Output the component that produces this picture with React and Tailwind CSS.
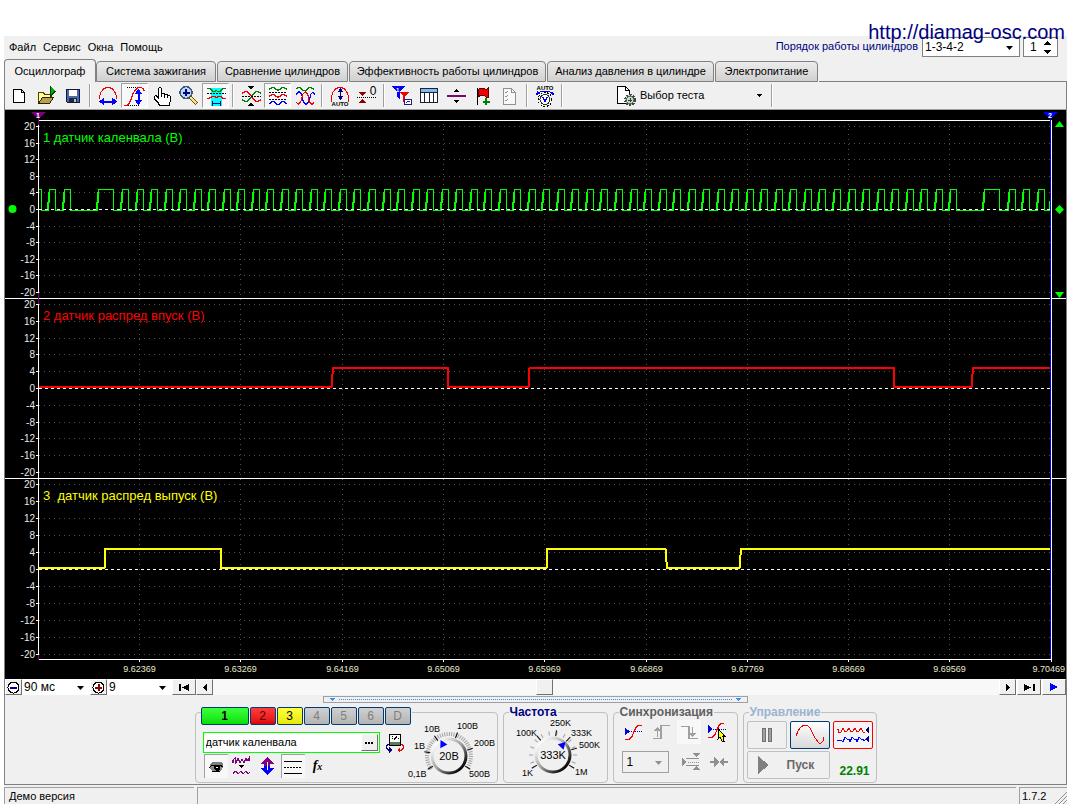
import React, { useState } from 'react';
import clsx from 'clsx';

const menuItems = ['Файл', 'Сервис', 'Окна', 'Помощь'];

const tabs = [
  { label: 'Осциллограф', width: 'w-[92px]' },
  { label: 'Система зажигания', width: 'w-[120px]' },
  { label: 'Сравнение цилиндров', width: 'w-[131px]' },
  { label: 'Эффективность работы цилиндров', width: 'w-[197px]' },
  { label: 'Анализ давления в цилиндре', width: 'w-[167px]' },
  { label: 'Электропитание', width: 'w-[103px]' },
];

const channels = [
  { id: '1', style: 'w-12 font-bold text-black bg-linear-to-b from-[#3cff3c] to-[#00e000]' },
  { id: '2', style: 'w-[26px] text-[#500000] bg-linear-to-b from-[#ff3c3c] to-[#e00000]' },
  { id: '3', style: 'w-[26px] text-black bg-linear-to-b from-[#ffff3c] to-[#e8e800]' },
  { id: '4', style: 'w-[26px] text-[#808080] bg-linear-to-b from-[#d0d0d0] to-[#b4b4b4]' },
  { id: '5', style: 'w-[26px] text-[#808080] bg-linear-to-b from-[#d0d0d0] to-[#b4b4b4]' },
  { id: '6', style: 'w-[26px] text-[#808080] bg-linear-to-b from-[#d0d0d0] to-[#b4b4b4]' },
  { id: 'D', style: 'w-[26px] text-[#808080] bg-linear-to-b from-[#d0d0d0] to-[#b4b4b4]' },
];

/* ---------- Small shared pieces ---------- */

const Icon = ({ w = 24, h = 24, children, className }) => (
  <svg
    width={w}
    height={h}
    viewBox={`0 0 ${w} ${h}`}
    fill="none"
    shapeRendering="crispEdges"
    className={clsx('shrink-0', className)}
    aria-hidden="true"
  >
    {children}
  </svg>
);

const ToolButton = ({ label, pressed, children }) => (
  <button
    type="button"
    aria-label={label}
    aria-pressed={pressed}
    className={clsx(
      'w-[27px] h-[25px] flex items-center justify-center border',
      pressed ? 'bg-[#f8f8f8] border-t-[#a0a0a0] border-l-[#a0a0a0] border-r-white border-b-white' : 'border-transparent'
    )}
  >
    {children}
  </button>
);

const Separator = () => <div className="w-0.5 h-[23px] mx-[3px] shrink-0 border-l border-[#a0a0a0] bg-white"></div>;

const Select = ({ label, value, className, muted }) => (
  <div className={clsx('relative flex shrink-0', className)}>
    <select
      aria-label={label}
      className="appearance-none w-full h-full pl-0.5 bg-transparent outline-none text-[12px] leading-4"
      defaultValue={value}
    >
      <option>{value}</option>
    </select>
    <svg width="7" height="4" viewBox="0 0 7 4" className="absolute right-1.5 top-1/2 -mt-px pointer-events-none">
      <path d="M0 0h7L3.5 4z" fill={muted ? '#909090' : '#000'} />
    </svg>
  </div>
);

/* ---------- Toolbar icons ---------- */

const NewIcon = () => (
  <Icon>
    <path d="M6.5 5.500h8l3 3v10h-11z" fill="#fff" stroke="#000" />
    <path d="M14.5 5.500v3h3" stroke="#000" />
  </Icon>
);
const OpenIcon = () => (
  <Icon>
    <path d="M4.5 19.500v-11h5l1 2h7v3" fill="#ffff9c" stroke="#504000" />
    <path d="M4.5 19.500l4-6h11l-4 6z" fill="#b8a050" stroke="#302000" />
    <path d="M16 2l6 5-6 5z" fill="#00b000" />
    <path d="M16.500 2v10l5-5" stroke="#004000" />
  </Icon>
);
const SaveIcon = () => (
  <Icon>
    <path d="M5.500 5.500h13v13h-12l-1-1z" fill="#4a6ab0" stroke="#101840" />
    <path d="M8 6h8v6H8z" fill="#fff" />
    <path d="M8 14h8v4H8z" fill="#202838" />
    <path d="M13 15h2v3h-2z" fill="#c0c0c0" />
  </Icon>
);
const WidthIcon = () => (
  <Icon>
    <path d="M3.500 15v-2l1-4 3-4 3-1.500h3l3 1.500 3 4 1 4v2" stroke="#f00000" />
    <path d="M6 17.500h12" stroke="#0000ff" strokeWidth="2" />
    <path d="M3 17.500l5-4v8zM21 17.500l-5-4v8z" fill="#0000ff" />
  </Icon>
);
const HeightIcon = () => (
  <Icon>
    <path d="M4 3.500h11M5 21.500h12" stroke="#000" strokeDasharray="1 1" />
    <path d="M1 21.500h3l2-2 2-4 2-6 2-3 3-3h3l2 1 1.500 3" stroke="#f00000" strokeWidth="1.200" />
    <path d="M15.500 8v10" stroke="#0000ff" strokeWidth="2" />
    <path d="M15.500 5l4 5h-8zM15.500 21l4-5h-8z" fill="#0000ff" />
  </Icon>
);
const HandIcon = () => (
  <Icon>
    <path
      d="M8.500 14V4.500l1-1h1l1 1V10l1-1h1l1 1v1l1-1h1l1 1v1l1-1h1l1 1.500V17l-1.500 3v1.500H9.500L8 18.500l-4-4v-2l2-1z"
      fill="#fff"
      stroke="#000"
    />
    <path d="M11.500 10v3M14.500 11v3M17.500 12v2" stroke="#000" />
  </Icon>
);
const ZoomIcon = () => (
  <Icon>
    <path d="M13 13l7 7" stroke="#705010" strokeWidth="4" />
    <path d="M13 13l6.500 6.500" stroke="#ffe080" strokeWidth="2" />
    <circle cx="9" cy="8.500" r="6" fill="#b8dcf8" stroke="#405870" strokeWidth="1.500" />
    <path d="M9 5v7M5.500 8.500h7" stroke="#000090" strokeWidth="2" />
  </Icon>
);
const CursorAreaIcon = () => (
  <Icon>
    <path d="M7 4h11v18H7z" fill="#00ffff" />
    <path d="M3 4.500h3l3 3h2l1-1 2 1h2l3-3h3" stroke="#008000" strokeWidth="1.300" />
    <path d="M3 9.500h19" stroke="#000" strokeDasharray="2 1" />
    <path d="M3 14.500h2l3-2h3l1 1 3-1h2l2 2h3" stroke="#f00000" strokeWidth="1.300" />
    <path d="M8 19.500h9M8.500 17v5M16.500 17v5" stroke="#000080" />
  </Icon>
);
const CrossIcon = () => (
  <Icon>
    <path d="M3 9.500l3-2h2l3 3 4 5 2 2h2l3-2" stroke="#f00000" strokeWidth="1.200" />
    <path d="M3 15.500l3 2h2l3-3 4-5 2-2h2l3 2" stroke="#008000" strokeWidth="1.200" />
    <path d="M3 12.500h19" stroke="#000" strokeDasharray="2 1" />
    <path d="M9 2h6l-3 4zM9 22h6l-3-4z" fill="#000" />
  </Icon>
);
const WavesIcon = () => (
  <Icon>
    <path d="M3 5.500l3-2h2l3 2.500h2l3-2.500h2l3 2" stroke="#008000" strokeWidth="1.200" />
    <path d="M3 12.500l3-2h2l3 2.500h2l3-2.500h2l3 2" stroke="#f00000" strokeWidth="1.200" />
    <path d="M3 20l3-2.500h2l3 3h2l3-3h2l3 2.500" stroke="#0000ff" strokeWidth="1.200" />
    <path d="M3 8.500h18M3 15.500h18" stroke="#000" strokeDasharray="2 1" />
  </Icon>
);
const OverlayIcon = () => (
  <Icon>
    <path d="M3 5l2-1.500h2l3 3h3l3-3h2l3 2" stroke="#008000" strokeWidth="1.200" />
    <path d="M3 11l2-3h2l2 3 1 6 2 3h2l2-3 2-7 2-2 2 3" stroke="#0000ff" strokeWidth="1.200" />
    <path d="M3 18l2 2h1l2-3 2-7 2-2h1l2 3 1 6 2 3h2l1-2" stroke="#f00000" strokeWidth="1.200" />
  </Icon>
);
const AutoHeightIcon = () => (
  <Icon>
    <path d="M3.500 18v-5l1-4 3-4 3-1.500h3l3 1.500 3 4 1 4v5" stroke="#f00000" />
    <path d="M12.500 6v8" stroke="#000080" strokeWidth="1.500" />
    <path d="M12.500 4l3 4h-6zM12.500 16l3-4h-6z" fill="#000080" />
    <text x="12" y="22" fontSize="6" fontWeight="bold" textAnchor="middle" fill="#000">AUTO</text>
  </Icon>
);
const ZeroIcon = () => (
  <Icon>
    <path d="M2 13.500h20" stroke="#000" strokeDasharray="1 1" />
    <path d="M4 8h7l-3.500 4.500zM4 19h7l-3.500-4.500z" fill="#900000" />
    <text x="18" y="11" fontSize="12" textAnchor="middle" fill="#000">0</text>
  </Icon>
);
const FilterIcon = () => (
  <Icon>
    <path d="M1 2h14l-5 6v7l-3-2V8z" fill="#0000ff" />
    <path d="M9 8h10l-4 4v8l-2-2v-6z" fill="#f00000" />
    <text x="6" y="8" fontSize="6" fontWeight="bold" fill="#fff">1</text>
    <path d="M14.500 15.500h7v5h-7z" fill="#fff" stroke="#202080" />
    <path d="M16 19l2-2 2 1" stroke="#2020c0" />
  </Icon>
);
const TableIcon = () => (
  <Icon>
    <path d="M3.500 4.500h17v14h-17z" fill="#fff" stroke="#202030" />
    <path d="M4 5h16v3H4z" fill="#80b8f0" />
    <path d="M3 8.500h18M7.500 8v10M12.500 8v10M16.500 8v10" stroke="#202030" />
  </Icon>
);
const SplitIcon = () => (
  <Icon>
    <path d="M3 12h19" stroke="#800080" strokeWidth="2" />
    <path d="M12 5l3 3H9zM12 19l3-3H9z" fill="#000" />
  </Icon>
);
const FlagIcon = () => (
  <Icon>
    <path d="M6.500 4v17" stroke="#000" />
    <path d="M7 6l2-2h3l2 1h2l1-1v9h-2l-2-2h-3l-3 2z" fill="#f00000" stroke="#600000" />
    <path d="M15 14v7M12 17.500h7" stroke="#008000" strokeWidth="2" />
  </Icon>
);
const ChecklistIcon = () => (
  <Icon>
    <path d="M5.500 4.500h8l4 4v12h-12z" fill="#f8f8f8" stroke="#909090" />
    <path d="M13.500 4.500v4h4" stroke="#909090" />
    <path d="M7 8l1 1 2-2M7 12l1 1 2-2M7 16l1 1 2-2" stroke="#909090" />
  </Icon>
);
const AutoSetupIcon = () => (
  <Icon>
    <text x="12" y="6" fontSize="6" fontWeight="bold" textAnchor="middle" fill="#000">AUTO</text>
    <path d="M5 9l3-1.500h8L19 9" stroke="#0000f0" />
    <path d="M3 11l1-4 3 3zM21 11l-1-4-3 3z" fill="#0000f0" />
    <circle cx="12" cy="15.500" r="7" stroke="#000" strokeDasharray="2 1.500" />
    <circle cx="12" cy="15.500" r="5" fill="#fff" stroke="#303030" />
    <path d="M9.500 13l2.500 4.500 2.500-4.500" stroke="#0000f0" strokeWidth="1.300" />
  </Icon>
);
const TestIcon = () => (
  <Icon w={20} h={20}>
    <path d="M1.500 0.500h8l4 4v13h-12z" fill="#fff" stroke="#000" />
    <path d="M9.500 0.500v4h4" stroke="#000" />
    <circle cx="14" cy="14" r="5" fill="#c0dcc0" stroke="#404840" strokeWidth="2" strokeDasharray="2 1.200" />
    <circle cx="14" cy="14" r="3.500" fill="#c8d8c8" stroke="#607060" />
    <path d="M14 12v4M12 14h4" stroke="#304030" />
  </Icon>
);

/* ---------- Oscillogram ---------- */

// zero: y of the 0 V line, step: pixels per 4 V
const tracks = [
  { zero: 99, step: 16.6, color: '#00ff00', title: '1 датчик каленвала (В)', titleY: 32 },
  { zero: 278, step: 16.8, color: '#ff0000', title: '2 датчик распред впуск (В)', titleY: 210 },
  { zero: 459, step: 17, color: '#ffff00', title: '3  датчик распред выпуск (В)', titleY: 390 },
];
const volts = [20, 16, 12, 8, 4, 0, -4, -8, -12, -16, -20];
const times = ['9.62369', '9.63269', '9.64169', '9.65069', '9.65969', '9.66869', '9.67769', '9.68669', '9.69569', '9.70469'];
const timeX = (i) => Math.round(134 + i * 101.3) + 0.5;

// Crankshaft teeth: x of the rising edge and width of the high level
const teeth = [{ x: 42, width: 6 }, { x: 57, width: 6 }, { x: 91, width: 15 }];
for (let i = 0; i < 58; i++) {
  teeth.push({ x: Math.round(115 + i * 14.53), width: 6 });
}
teeth.push({ x: 977, width: 15 }, { x: 1002, width: 6 }, { x: 1016, width: 6 }, { x: 1031, width: 6 });

const crankPath = teeth.reduce(
  (d, { x, width }) => `${d}H${x + 0.5}L${x + 1.5} 91L${x + 2.5} 79.5H${x + 2.5 + width}V100.5`,
  'M34 79.5H36.5V100.5'
);
const risePath = teeth.map(({ x }) => `M${x + 1} 101V92M${x + 2} 93V82`).join('');

const Oscillogram = () => (
  <svg viewBox="0 0 1061 569" className="block w-full h-auto bg-black" role="img" aria-label="Осциллограмма">
    {tracks.map((track) => (
      <g key={track.title}>
        {volts.map((v) => {
          const y = Math.round(track.zero - (v / 4) * track.step) + 0.5;
          return (
            <g key={v}>
              {v !== 0 && <path d={`M34 ${y}H1045`} stroke="#505050" strokeDasharray="1 4" />}
              <path d={`M31 ${y}h3`} stroke="#fff" />
              <text x="30" y={y + 3} fontSize="10" textAnchor="end" fill="#e8e8e8">{v}</text>
            </g>
          );
        })}
      </g>
    ))}
    {times.map((t, i) => (
      <g key={t}>
        {i < 9 && <path d={`M${timeX(i)} 14V548`} stroke="#505050" strokeDasharray="1 4" />}
        <path d={`M${timeX(i)} 549v3`} stroke="#fff" />
        <text x={i < 9 ? timeX(i) : 1060} y="562" fontSize="9" textAnchor={i < 9 ? 'middle' : 'end'} fill="#e8e8d0">{t}</text>
      </g>
    ))}

    {/* Signals */}
    <g fill="none" shapeRendering="crispEdges">
      <path d={crankPath + 'H1044.5V91'} stroke="#00ff00" />
      <path d={risePath} stroke="#00ff00" strokeWidth="2" />
      <path d="M34 277H326.500L328 258H442.500V277H523.500L524.500 258H888.500V277H966.500L968 258H1045" stroke="#ff0000" strokeWidth="2" />
      <path d="M34 458H99.500L100.500 438.500H215.500V458H541.500L542.500 438.500H660.500L662 458H734.500L736 438.500H1045" stroke="#ffff00" strokeWidth="2" />
    </g>
    {tracks.map((track) => (
      <g key={track.title}>
        <path d={`M34 ${track.zero + 0.5}H1045`} stroke="#fff" strokeDasharray="3 3" />
        <text x="38" y={track.titleY} fontSize="13" fill={track.color} style={{ whiteSpace: 'pre' }}>{track.title}</text>
      </g>
    ))}

    {/* Frame */}
    <path d="M33 10.500H1046M0 188.500H1061M0 368.500H1061M33 549.500H1046M33.500 15V549" stroke="#fff" />
    <path d="M33.500 8v7M33.500 183v11M33.500 545v5" stroke="#800080" />
    <path d="M1045.500 8V549" stroke="#0000ff" />
    <path d="M1046.500 10V552" stroke="#fff" />
    <path d="M26 2h15l-7.500 7z" fill="#800080" />
    <path d="M1038 2h15l-7.500 7z" fill="#0000ff" />
    <text x="33" y="8" fontSize="7" fontWeight="bold" textAnchor="middle" fill="#fff">1</text>
    <text x="1045" y="8" fontSize="7" fontWeight="bold" textAnchor="middle" fill="#fff">2</text>
    <circle cx="7.500" cy="99" r="4" fill="#00ff00" />
    <path d="M1050 17h9l-4.500-6zM1050 182h9l-4.500 6zM1054.500 95l4.500 4.500-4.500 4.500-4.500-4.500z" fill="#00ff00" />
  </svg>
);

/* ---------- Knobs ---------- */

const Knob = ({ id, w, cx, value, labels, ticks, majors, pointer }) => (
  <svg width={w} height="62" viewBox={`0 0 ${w} 62`} role="img" aria-label={value}>
    <defs>
      <linearGradient id={id} x1="0" y1="0" x2="1" y2="1">
        <stop offset="0.150" stopColor="#ffffff" />
        <stop offset="0.500" stopColor="#a0a0a0" />
        <stop offset="0.850" stopColor="#000000" />
      </linearGradient>
    </defs>
    {ticks.map((a) => (
      <path key={a} d="M0 -20v-4" stroke="#a0a0a0" transform={`translate(${cx} 37) rotate(${a})`} />
    ))}
    {majors.map((a) => (
      <path key={a} d="M0 -19v-6" stroke="#000" transform={`translate(${cx} 37) rotate(${a})`} />
    ))}
    <circle cx={cx} cy="37" r="18.500" fill={`url(#${id})`} />
    <circle cx={cx} cy="37" r="15.500" fill="#f0f0f0" />
    <path d="M-4 2h8L0-5z" fill="#0000ff" transform={`translate(${cx} 37) rotate(${pointer}) translate(0 -13)`} />
    <text x={cx} y="41" fontSize="11" textAnchor="middle">{value}</text>
    {labels.map((l) => (
      <text key={l.text} x={l.x} y={l.y} fontSize="9">{l.text}</text>
    ))}
  </svg>
);

const range = (from, to, step) => {
  const list = [];
  for (let a = from; a <= to; a += step) list.push(a);
  return list;
};

const Group = ({ title, className, titleClass, children }) => (
  <fieldset className={clsx('h-[77px] px-[3px] border border-[#c0c0c0] rounded-sm min-w-0', className)}>
    <legend className={clsx('ml-0.5 px-px text-[12px] leading-[13px] font-bold', titleClass)}>{title}</legend>
    {children}
  </fieldset>
);

const MiniButton = ({ label, pressed, children, className }) => (
  <button
    type="button"
    aria-label={label}
    className={clsx(
      'w-6 h-6 shrink-0 flex items-center justify-center',
      pressed && 'bg-[#f8f8f8] border-t border-l border-[#a0a0a0]',
      className
    )}
  >
    {children}
  </button>
);

const ScrollButton = ({ label, className, children }) => (
  <button
    type="button"
    aria-label={label}
    className={clsx('h-4 shrink-0 flex items-center justify-center bg-[#f0f0f0] border border-t-white border-l-white border-r-[#707070] border-b-[#707070]', className)}
  >
    {children}
  </button>
);

const ChannelPanel = ({ active, onSelect }) => {
  const [name, setName] = useState('датчик каленвала');

  return (
    <div className="w-[303px] h-[71px] mt-1.5 border border-[#c0c0c0] rounded-sm flex justify-between">
      <div className="w-[216px] shrink-0 pl-[5px]">
        <div className="-mt-1.5 flex gap-px bg-[#f0f0f0]">
          {channels.map((c) => (
            <button
              key={c.id}
              type="button"
              aria-pressed={active === c.id}
              onClick={() => onSelect(c.id)}
              className={clsx('h-[18px] border border-[#003c74] rounded-xs text-[12px] leading-4', c.style)}
            >
              {c.id}
            </button>
          ))}
        </div>
        <div className="mt-[7px] ml-0.5 flex items-center gap-1.5">
          <div className="w-[177px] h-[21px] border border-[#00ff00] bg-white flex items-center pr-px">
            <input
              aria-label="Название канала"
              value={name}
              onChange={(e) => setName(e.target.value)}
              className="flex-1 min-w-0 pl-0.5 text-[11px] outline-none"
            />
            <button type="button" aria-label="Выбрать датчик" className="w-[17px] h-[17px] bg-[#f0f0f0] border border-t-white border-l-white border-[#707070] flex items-center justify-center">
              <Icon w={8} h={2}><path d="M0 0h2v2H0zM3 0h2v2H3zM6 0h2v2H6z" fill="#000" /></Icon>
            </button>
          </div>
          <button type="button" aria-label="Калибровка">
            <Icon w={18} h={20}>
              <path d="M3.500 1.500h11v11h-11z" fill="#fff" stroke="#000" />
              <path d="M4 9h10v3H4z" fill="#607860" />
              <path d="M6 5.500h1M8 6.500l3-3M12 5.500h1M6 3.500h1" stroke="#000" />
              <path d="M2.500 11l-2 2v2l2 2h3" stroke="#000080" />
              <path d="M3 14v6l3-3z" fill="#000080" />
              <path d="M15.500 11l2 2v2l-2 2h-3" stroke="#f00000" />
              <path d="M14 14v6l-3-3z" fill="#f00000" />
            </Icon>
          </button>
        </div>
        <div className="mt-px ml-[3px] flex gap-[1px]">
          <MiniButton label="Показать канал" pressed>
            <Icon w={16} h={16}>
              <path d="M2 5l3-2h8l2 2v2H2z" fill="#808078" />
              <path d="M1 9l3-3h8l3 2-2 4H5z" fill="#908880" />
              <path d="M1 8.500l3-2h8l3 1M4 12.500h8" stroke="#000" />
              <path d="M6 7h6v4l-2 1H8l-2-2z" fill="#000" />
              <path d="M8 8h2v1H8z" fill="#fff" />
            </Icon>
          </MiniButton>
          <MiniButton label="Сглаживание">
            <Icon w={20} h={20}>
              <path d="M2 7V4l2-2 1 5 2-5 2 5 2-4 2 4 2-5 1 3 2-3v3" stroke="#800080" strokeWidth="1.200" />
              <path d="M7 9h6l-3 3z" fill="#000" />
              <path d="M2 18l2-3h1l2 3 3-3 2 3 3-3 2 3 2-2" stroke="#800080" />
            </Icon>
          </MiniButton>
          <MiniButton label="Инвертировать" className="ml-px">
            <Icon w={20} h={20}>
              <path d="M10 1l7 7h-4v2H7V8H3z" fill="#800080" />
              <path d="M10 19l7-7h-4v-2H7v2H3z" fill="#0000ff" />
              <path d="M10.500 6v8" stroke="#fff" strokeWidth="1.500" />
            </Icon>
          </MiniButton>
          <MiniButton label="Линии уровня" pressed className="ml-px">
            <Icon w={18} h={16}>
              <path d="M0 2.500h18M0 14.500h18" stroke="#000" />
              <path d="M0 8.500h18" stroke="#000" strokeDasharray="2 1" />
            </Icon>
          </MiniButton>
          <MiniButton label="Функция">
            <span className="font-['Liberation_Serif',serif] italic font-bold text-[14px] leading-4">f<span className="text-[10px]">x</span></span>
          </MiniButton>
        </div>
      </div>
      <div className="-ml-4 mt-1.5">
        <Knob
          id="rangeRing"
          w={93}
          cx={45}
          value="20В"
          ticks={range(-125, 125, 6)}
          majors={[-122, -80, -36, 20, 72, 122]}
          pointer={-28}
          labels={[
            { text: '0,1В', x: 4, y: 58 },
            { text: '1В', x: 10, y: 30 },
            { text: '10В', x: 20, y: 13 },
            { text: '100В', x: 53, y: 10 },
            { text: '200В', x: 70, y: 27 },
            { text: '500В', x: 65, y: 58 },
          ]}
        />
      </div>
    </div>
  );
};

const SyncPanel = () => (
  <Group title="Синхронизация" className="w-[125px]" titleClass="text-[#606060]">
    <div className="mt-px flex gap-1 pl-1">
      <MiniButton label="Синхронизация включена">
        <Icon>
          <path d="M4 8v7l5-3.500z" fill="#0000e0" />
          <path d="M4 11.500h17" stroke="#0000c0" strokeDasharray="1 1" />
          <path d="M4 19.500h4l3-3 2-5 2-4 2-2h4" stroke="#f00000" strokeWidth="1.200" />
        </Icon>
      </MiniButton>
      <MiniButton label="По фронту">
        <Icon>
          <path d="M4 18.500h8v-13h9M8.500 17V9" stroke="#a0a0a0" strokeWidth="1.500" />
          <path d="M5 11l3.500-4 3.500 4z" fill="#a0a0a0" />
        </Icon>
      </MiniButton>
      <MiniButton label="По спаду" className="bg-[#f8f8f8]">
        <Icon>
          <path d="M4 6.500h8v12h9M15.500 7v7" stroke="#a0a0a0" strokeWidth="1.500" />
          <path d="M12 13l3.500 4 3.500-4z" fill="#a0a0a0" />
        </Icon>
      </MiniButton>
      <MiniButton label="Указать уровень">
        <Icon>
          <path d="M3 5v8l5-4z" fill="#0000e0" />
          <path d="M4 9.500h18" stroke="#0000c0" strokeDasharray="1 1" />
          <path d="M3 17.500h4l3-3 2-5 2-4 2-2h3" stroke="#f00000" strokeWidth="1.200" />
          <path d="M13 8.500v10l2-1.500 2 4h2l-1-4.500h2z" fill="#ffff00" stroke="#000" />
        </Icon>
      </MiniButton>
    </div>
    <div className="mt-1.5 pl-[5px] flex items-center">
      <Select label="Канал синхронизации" value="1" muted className="w-[47px] h-[22px] pl-0.5 border border-[#a0a0a0]" />
      <MiniButton label="Уровень" className="ml-2.5">
        <Icon>
          <path d="M3 8l5 4-5 4zM14 3h7l-3.500 4zM14 20h7l-3.500-4z" fill="#909090" />
          <path d="M7 8.500h13M7 15.500h13" stroke="#909090" />
          <path d="M9 12.500h12" stroke="#909090" strokeDasharray="1 1" />
        </Icon>
      </MiniButton>
      <MiniButton label="Центрировать" className="ml-1">
        <Icon><path d="M3 11h4V7l5 5-5 5v-4H3zM21 11h-4V7l-5 5 5 5v-4h4z" fill="#909090" /></Icon>
      </MiniButton>
    </div>
  </Group>
);

const ControlPanel = () => (
  <Group title="Управление" className="w-[134px]" titleClass="text-[#9ab4d2]">
    <div className="mt-0.5 flex gap-[3px]">
      <button type="button" aria-label="Пауза" className="w-10 h-7 flex items-center justify-center border border-[#c0c0c0] rounded-xs">
        <Icon w={12} h={16}><path d="M1.500 1.500h3v13h-3zM7.500 1.500h3v13h-3z" fill="#a0a0a0" stroke="#707070" /></Icon>
      </button>
      <button type="button" aria-label="Осциллограф" className="w-10 h-7 flex items-center justify-center border border-[#003c74] rounded-xs bg-linear-to-b from-white to-[#d8d8d8]">
        <Icon w={30} h={22}><path d="M1 12l2-5 3-4 3-2h3l3 3 5 10 4 5h2l2-2 1-4" stroke="#f00000" /></Icon>
      </button>
      <button type="button" aria-label="Самописец" className="w-10 h-7 flex items-center justify-center border border-[#ff0000] rounded-xs bg-[#f4f4f4]">
        <Icon w={34} h={22}>
          <path d="M1 5h1l1 4 2-1 2-4 2 4 2-1 2-3 2 4 2-1 2-3 2 4 2-1 2-3 2 4h2" stroke="#f00000" />
          <path d="M1 16h4l2 2 2-5 2 2h2l1 3 2-5 2 2h2l1 3 2-5 2 2h2l1 2 2-2" stroke="#0000ff" />
          <path d="M33 3v6l-4-3zM33 12v6l-4-3z" fill="#000080" />
        </Icon>
      </button>
    </div>
    <div className="mt-0.5 flex items-center justify-between pr-[3px]">
      <button type="button" className="w-[83px] h-7 flex items-center pl-2.5 gap-[18px] border border-[#c0c0c0] rounded-xs text-[12px] font-bold text-[#686868]">
        <Icon w={11} h={18}><path d="M0 0v18l11-9z" fill="#808080" /></Icon>
        Пуск
      </button>
      <output className="mt-3 text-[12px] leading-4 font-bold text-[#008000]">22.91</output>
    </div>
  </Group>
);

const App = () => {
  const [activeTab, setActiveTab] = useState(0);
  const [channel, setChannel] = useState('1');

  return (
    <div className="relative bg-white pt-9 pl-1 pr-3 pb-1 font-['Liberation_Sans',Arial,sans-serif] text-[11px] text-black">
      <a href="http://diamag-osc.com" className="absolute right-3.5 top-5 z-10 text-[20px] leading-6 text-[#000080]">
        http://diamag-osc.com
      </a>

      <div className="bg-[#f0f0f0]">
        {/* Menu */}
        <div className="h-[23px] flex items-center justify-between">
          <nav className="flex pl-[5px] gap-[7px]">
            {menuItems.map((item) => (
              <button key={item} type="button">{item}</button>
            ))}
          </nav>
          <div className="flex items-center pr-[9px] mb-0.5">
            <label htmlFor="cylinder" className="mr-1 text-[#000080]">Порядок работы цилиндров</label>
            <div className="relative w-[98px] h-5 border border-[#808080] bg-white">
              <select id="cylinder" className="appearance-none w-full h-full pl-0.5 text-[12px] leading-4 outline-none">
                <option>1-3-4-2</option>
                <option>1-2-4-3</option>
              </select>
              <svg width="7" height="4" viewBox="0 0 7 4" className="absolute right-1.5 top-2 pointer-events-none"><path d="M0 0h7L3.500 4z" /></svg>
            </div>
            <div className="ml-[3px] w-[35px] h-5 border border-[#808080] bg-white flex items-center pr-1.5">
              <input aria-label="Номер цилиндра" defaultValue="1" className="w-5 flex-1 min-w-0 pl-1.5 text-[12px] outline-none" />
              <Icon w={8} h={14}><path d="M0 5h8L4 1zM0 10h8l-4 4z" fill="#000" /></Icon>
            </div>
          </div>
        </div>

        {/* Tabs */}
        <div role="tablist" className="h-[23px] flex items-end">
          {tabs.map((tab, index) => (
            <button
              key={tab.label}
              type="button"
              role="tab"
              aria-selected={activeTab === index}
              onClick={() => setActiveTab(index)}
              className={clsx(
                'shrink-0 border border-[#808080] rounded-t-sm whitespace-nowrap',
                tab.width,
                activeTab === index ? 'h-[23px] border-b-0 bg-[#f0f0f0]' : 'h-[21px] mr-px bg-linear-to-b from-[#ececec] to-[#d0d0d0]'
              )}
            >
              {tab.label}
            </button>
          ))}
          <div className="flex-1 border-b border-[#808080]"></div>
        </div>

        <div className="border-x border-b border-[#808080]">
          {/* Toolbar */}
          <div className="h-7 flex items-center border-b border-[#a0a0a0]">
            <ToolButton label="Новый"><NewIcon /></ToolButton>
            <ToolButton label="Открыть"><OpenIcon /></ToolButton>
            <ToolButton label="Сохранить"><SaveIcon /></ToolButton>
            <Separator />
            <ToolButton label="Растянуть по времени"><WidthIcon /></ToolButton>
            <ToolButton label="Растянуть по амплитуде" pressed><HeightIcon /></ToolButton>
            <ToolButton label="Рука"><HandIcon /></ToolButton>
            <ToolButton label="Увеличить"><ZoomIcon /></ToolButton>
            <ToolButton label="Область между линейками" pressed><CursorAreaIcon /></ToolButton>
            <Separator />
            <ToolButton label="Сжать"><CrossIcon /></ToolButton>
            <ToolButton label="Раздельно" pressed><WavesIcon /></ToolButton>
            <ToolButton label="Совместно"><OverlayIcon /></ToolButton>
            <Separator />
            <ToolButton label="Автомасштаб"><AutoHeightIcon /></ToolButton>
            <ToolButton label="Ноль"><ZeroIcon /></ToolButton>
            <Separator />
            <ToolButton label="Фильтр"><FilterIcon /></ToolButton>
            <ToolButton label="Таблица"><TableIcon /></ToolButton>
            <ToolButton label="Разделить"><SplitIcon /></ToolButton>
            <ToolButton label="Добавить метку"><FlagIcon /></ToolButton>
            <ToolButton label="Список"><ChecklistIcon /></ToolButton>
            <Separator />
            <ToolButton label="Автонастройка"><AutoSetupIcon /></ToolButton>
            <Separator />
            <button type="button" className="w-[152px] h-6 ml-[50px] flex items-center gap-1">
              <TestIcon />
              Выбор теста
              <Icon w={5} h={3} className="ml-auto mr-1.5"><path d="M0 0h5L2.500 3z" fill="#000" /></Icon>
            </button>
            <Separator />
          </div>

          <Oscillogram />

          {/* Scale and scroll bar */}
          <div className="h-4 flex bg-white">
            <ScrollButton label="Уменьшить" className="w-[17px]">
              <Icon w={13} h={13}><circle cx="6.500" cy="6.500" r="5.500" fill="#fff" stroke="#000" /><path d="M3 6.500h7" stroke="#000090" strokeWidth="2" /></Icon>
            </ScrollButton>
            <Select label="Развёртка" value="90  мс" className="w-[68px]" />
            <ScrollButton label="Увеличить" className="w-[17px]">
              <Icon w={13} h={13}><circle cx="6.500" cy="6.500" r="5.500" fill="#fff" stroke="#000" /><path d="M3 6.500h7M6.500 3v7" stroke="#900000" strokeWidth="2" /></Icon>
            </ScrollButton>
            <Select label="Масштаб" value="9" className="w-[65px]" />
            <ScrollButton label="В начало" className="w-6">
              <Icon w={11} h={7}><path d="M0 0h2v7H0zM10 0v7L3 3.500z" fill="#000" /></Icon>
            </ScrollButton>
            <ScrollButton label="Назад" className="w-[17px]">
              <Icon w={4} h={7}><path d="M4 0v7L0 3.500z" fill="#000" /></Icon>
            </ScrollButton>
            <div className="flex-1 grid grid-cols-[324fr_17px_447fr] bg-[#f8f8f8]">
              <div></div>
              <ScrollButton label="Прокрутка" />
            </div>
            <ScrollButton label="Вперёд" className="w-[17px]">
              <Icon w={4} h={7}><path d="M0 0v7l4-3.500z" fill="#000" /></Icon>
            </ScrollButton>
            <ScrollButton label="В конец" className="w-6 ml-px">
              <Icon w={11} h={7}><path d="M9 0h2v7H9zM0 0v7l7-3.500z" fill="#000" /></Icon>
            </ScrollButton>
            <ScrollButton label="Воспроизвести" className="w-6 ml-px">
              <Icon w={8} h={8}><path d="M0 0v8l8-4z" fill="#0000ff" /></Icon>
            </ScrollButton>
          </div>

          {/* Splitter */}
          <div className="mt-px w-2/5 mx-auto h-[7px] px-1.5 flex items-center gap-1 border border-[#a0a0a0]">
            <Icon w={5} h={3}><path d="M0 0h5L2.500 3z" fill="#3090ff" /></Icon>
            <div className="flex-1 border-t border-dotted border-[#3090ff]"></div>
            <Icon w={5} h={3}><path d="M0 0h5L2.500 3z" fill="#3090ff" /></Icon>
          </div>

          {/* Control panels */}
          <div className="mt-[3px] pb-px flex justify-center gap-[5px]">
            <ChannelPanel active={channel} onSelect={setChannel} />
            <Group title="Частота" className="w-[105px]" titleClass="text-[#000080]">
              <div className="-mt-px">
                <Knob
                  id="freqRing"
                  w={97}
                  cx={46}
                  value="333K"
                  ticks={range(-110, 110, 20)}
                  majors={[-122, -40, 8, 44, 74, 122]}
                  pointer={44}
                  labels={[
                    { text: '1K', x: 15, y: 58 },
                    { text: '100K', x: 9, y: 18 },
                    { text: '250K', x: 43, y: 8 },
                    { text: '333K', x: 64, y: 18 },
                    { text: '500K', x: 72, y: 30 },
                    { text: '1M', x: 68, y: 57 },
                  ]}
                />
              </div>
            </Group>
            <SyncPanel />
            <ControlPanel />
          </div>
        </div>

        {/* Status bar */}
        <footer className="pt-0.5 h-[19px] flex gap-[3px] leading-4">
          <div className="w-[190px] pl-1 border-t border-l border-[#a0a0a0]">Демо версия</div>
          <div className="flex-1 border-t border-l border-[#a0a0a0]"></div>
          <div className="w-12 pl-0.5 flex items-end justify-between border-t border-l border-[#a0a0a0]">
            1.7.2
            <Icon w={12} h={12}><path d="M0 12L12 0M4 12l8-8M8 12l4-4" stroke="#909090" /></Icon>
          </div>
        </footer>
      </div>
    </div>
  );
};

export default App;
